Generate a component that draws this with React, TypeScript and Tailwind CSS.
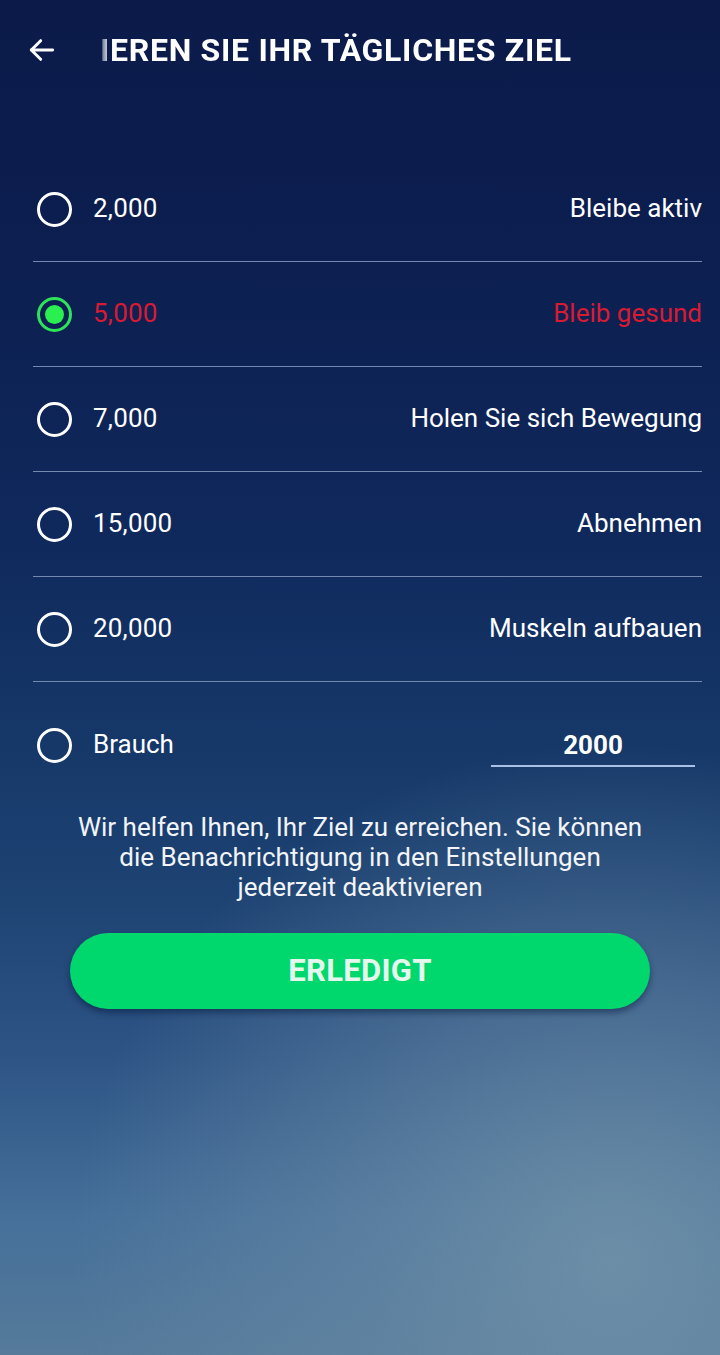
import React from "react";

const rows = [
  { v: "2,000", l: "Bleibe aktiv", sel: false },
  { v: "5,000", l: "Bleib gesund", sel: true },
  { v: "7,000", l: "Holen Sie sich Bewegung", sel: false },
  { v: "15,000", l: "Abnehmen", sel: false },
  { v: "20,000", l: "Muskeln aufbauen", sel: false },
];

function Radio({ sel }: { sel: boolean }) {
  if (sel) {
    return (
      <div className="w-[35px] h-[35px] rounded-full border-[3px] border-[#2ee35a] flex items-center justify-center shrink-0">
        <div className="w-[19px] h-[19px] rounded-full bg-[#2af04f]" />
      </div>
    );
  }
  return <div className="w-[35px] h-[35px] rounded-full border-[3px] border-white shrink-0" />;
}

export default function App() {
  return (
    <div
      className="w-[720px] h-[1355px] overflow-hidden text-white bg-[radial-gradient(ellipse_75%_38%_at_85%_93%,rgba(112,145,168,0.9)_0%,rgba(105,138,165,0.55)_45%,rgba(90,125,160,0)_100%),linear-gradient(180deg,#0b1a49_0%,#0c1f50_20%,#10295d_40%,#163869_55%,#1d4373_66%,#2d5485_78%,#46709a_90%,#557a9a_100%)]"
      style={{ fontFamily: "Roboto, 'Noto Sans', sans-serif" }}
    >
      {/* Header */}
      <div className="flex items-center h-[100px] pl-[26px]">
        <svg width="32" height="32" viewBox="0 0 24 24" fill="none" stroke="white" strokeWidth="2.2" strokeLinecap="round" strokeLinejoin="round">
          <path d="M20 12H4" />
          <path d="M11 5l-7 7 7 7" />
        </svg>
        <div className="ml-[42px] overflow-hidden w-[540px]">
          <div className="text-[32px] leading-[40px] font-bold whitespace-nowrap tracking-[0.7px] [mask-image:linear-gradient(90deg,rgba(0,0,0,0.25)_0px,rgba(0,0,0,1)_10px)]">
            IEREN SIE IHR TÄGLICHES ZIEL
          </div>
        </div>
      </div>

      {/* Options */}
      <div className="mt-[57px] pl-[33px] pr-[18px]">
        {rows.map((r, i) => (
          <div key={i}>
            <div className="h-[104px] flex items-center">
              <div className="ml-[4px]">
                <Radio sel={r.sel} />
              </div>
              <div className={`ml-[21px] mt-[-2px] text-[26px] tracking-[0.2px] ${r.sel ? "text-[#d81b34]" : "text-white"}`}>{r.v}</div>
              <div className={`ml-auto mt-[-2px] text-[26px] ${r.sel ? "text-[#d81b34]" : "text-white"}`}>{r.l}</div>
            </div>
            <div className="h-px bg-[#7389b0]" />
          </div>
        ))}
        <div className="h-[132px] flex items-center">
          <div className="ml-[4px] mt-[-6px]">
            <Radio sel={false} />
          </div>
          <div className="ml-[21px] mt-[-8px] text-[26px]">Brauch</div>
          <div className="ml-auto mr-[7px] w-[204px] flex flex-col items-center">
            <div className="text-[26px] font-bold leading-[30px]">2000</div>
            <div className="mt-[5px] h-[2px] w-full bg-[#a9c1e6]" />
          </div>
        </div>
      </div>

      {/* Info text */}
      <p className="text-center text-[26px] leading-[30px] text-[#f2f4f8] px-[40px] mt-[-2px]">
        Wir helfen Ihnen, Ihr Ziel zu erreichen. Sie können
        <br />
        die Benachrichtigung in den Einstellungen
        <br />
        jederzeit deaktivieren
      </p>

      {/* Button */}
      <div className="px-[70px] mt-[31px]">
        <button className="w-full h-[76px] rounded-full bg-[#00d86e] text-[#e6f7ee] text-[31px] font-bold tracking-[0.3px] shadow-[0_4px_6px_rgba(0,20,50,0.45)]">
          ERLEDIGT
        </button>
      </div>
    </div>
  );
}
